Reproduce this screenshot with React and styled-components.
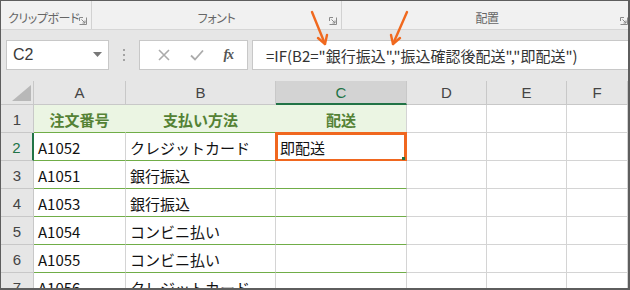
import styled, { createGlobalStyle } from "styled-components"

const Global = createGlobalStyle`
    html, body { margin: 0; padding: 0; background: #ffffff; }
    body { font-family: "Noto Sans CJK JP", "Liberation Sans", sans-serif; }
`

const COLS = [33, 92, 150, 131, 80, 80, 61]
const LETTERS = ["A", "B", "C", "D", "E", "F"]

const rows = [
    { n: 1, a: "注文番号", b: "支払い方法", c: "配送", head: true },
    { n: 2, a: "A1052", b: "クレジットカード", c: "即配送", active: true },
    { n: 3, a: "A1051", b: "銀行振込" },
    { n: 4, a: "A1053", b: "銀行振込" },
    { n: 5, a: "A1054", b: "コンビニ払い" },
    { n: 6, a: "A1055", b: "コンビニ払い" },
    { n: 7, a: "A1056", b: "クレジットカード" },
]

function Launcher() {
    return (
        <LauncherIcon width="8" height="8" viewBox="0 0 8 8">
            <path d="M0.5 4 V0.5 H4" fill="none" stroke="#8a8a8a" strokeWidth="1" />
            <path d="M0.5 7.5 H7.5 V0.5" fill="none" stroke="#8a8a8a" strokeWidth="1" />
            <path d="M2.5 2.5 L6 6 M6 3.5 V6 H3.5" fill="none" stroke="#8a8a8a" strokeWidth="1" />
        </LauncherIcon>
    )
}

export default function App() {
    return (
        <>
            <Global />
            <Frame>
                <Ribbon>
                    <Group w={91}>
                        <GroupLabel>クリップボード</GroupLabel>
                        <Launcher />
                    </Group>
                    <Group w={250}>
                        <GroupLabel>フォント</GroupLabel>
                        <Launcher />
                    </Group>
                    <Group w={290} last>
                        <GroupLabel>配置</GroupLabel>
                        <Launcher />
                    </Group>
                </Ribbon>

                <FormulaArea>
                    <NameBox>
                        <span>C2</span>
                        <svg width="9" height="5" viewBox="0 0 9 5">
                            <path d="M0 0 H9 L4.5 5 Z" fill="#777" />
                        </svg>
                    </NameBox>
                    <Grip>
                        <i /><i /><i />
                    </Grip>
                    <ButtonsBox>
                        <svg width="12" height="12" viewBox="0 0 12 12">
                            <path d="M1 1 L11 11 M11 1 L1 11" stroke="#ababab" strokeWidth="1.6" />
                        </svg>
                        <svg width="14" height="12" viewBox="0 0 14 12">
                            <path d="M1 6.5 L5 10.5 L13 1.5" fill="none" stroke="#ababab" strokeWidth="1.8" />
                        </svg>
                        <Fx>fx</Fx>
                    </ButtonsBox>
                    <FormulaInput>=IF(B2="銀行振込","振込確認後配送","即配送")</FormulaInput>
                </FormulaArea>

                <Sheet>
                    <Corner>
                        <svg width="19" height="16" viewBox="0 0 19 16">
                            <path d="M19 0 V16 H0 Z" fill="#b8b8b8" />
                        </svg>
                    </Corner>
                    {LETTERS.map((l) => (
                        <ColHead key={l} active={l === "C"}>{l}</ColHead>
                    ))}
                    {rows.map((r) => (
                        <Row key={r.n} r={r} />
                    ))}
                </Sheet>

                <Arrows width="630" height="60" viewBox="0 0 630 60">
                    <g fill="none" stroke="#f0691f" strokeWidth="2.4" strokeLinecap="round" strokeLinejoin="round">
                        <path d="M312 12 L325 44" />
                        <path d="M318 38 L325 44 L327 35" />
                        <path d="M407 12 L393 44" />
                        <path d="M391 35 L393 44 L400 38" />
                    </g>
                </Arrows>
            </Frame>
        </>
    )
}

function Row({ r }) {
    return (
        <>
            <RowHead active={r.active}>{r.n}</RowHead>
            <Cell head={r.head} table pad>{r.a}</Cell>
            <Cell head={r.head} table pad>{r.b}</Cell>
            <Cell head={r.head} table pad={!r.head} last>
                {r.c}
                {r.active && (
                    <Selection>
                        <Handle />
                    </Selection>
                )}
            </Cell>
            <Cell />
            <Cell />
            <Cell />
        </>
    )
}

const Frame = styled.div`
    position: relative;
    width: 630px;
    height: 290px;
    box-sizing: border-box;
    border: 1px solid #5e5e5e;
    border-right-width: 2px;
    border-bottom-width: 2px;
    overflow: hidden;
    background: #ffffff;
`

const Ribbon = styled.div`
    display: flex;
    height: 28px;
    background: #f1f1f1;
    border-bottom: 1px solid #d6d6d6;
`

const Group = styled.div`
    position: relative;
    width: ${(p) => p.w}px;
    flex: none;
    box-sizing: border-box;
    border-right: ${(p) => (p.last ? "none" : "1px solid #d2d2d2")};
    display: flex;
    align-items: flex-end;
    justify-content: center;
    padding-bottom: 3px;
    &:first-child {
        justify-content: flex-start;
        padding-left: 7px;
    }
`

const GroupLabel = styled.span`
    font-size: 12px;
    line-height: 16px;
    color: #666666;
    font-feature-settings: "palt";
    letter-spacing: -0.4px;
`

const LauncherIcon = styled.svg`
    position: absolute;
    right: 4px;
    bottom: 4px;
`

const FormulaArea = styled.div`
    display: flex;
    align-items: flex-start;
    height: 51px;
    box-sizing: border-box;
    padding: 10px 0 0 5px;
    background: #e6e6e6;
`

const Box = styled.div`
    height: 30px;
    box-sizing: border-box;
    background: #ffffff;
    border: 1px solid #c8c8c8;
    display: flex;
    align-items: center;
`

const NameBox = styled(Box)`
    width: 103px;
    justify-content: space-between;
    padding: 0 6px 0 6px;

    span {
        font-family: "Liberation Sans", sans-serif;
        font-size: 16px;
        color: #3a3a3a;
    }
    svg {
        margin-top: -2px;
    }
`

const Grip = styled.div`
    width: 30px;
    height: 30px;
    display: flex;
    flex-direction: column;
    align-items: center;
    justify-content: center;
    gap: 3px;

    i {
        display: block;
        width: 2px;
        height: 2px;
        background: #a3a3a3;
    }
`

const ButtonsBox = styled(Box)`
    width: 109px;
    justify-content: space-around;
    padding: 0 4px 0 8px;
    margin-right: 4px;
`

const Fx = styled.span`
    font-family: "Liberation Serif", serif;
    font-style: italic;
    font-weight: bold;
    font-size: 14px;
    color: #555555;
    letter-spacing: -1px;
`

const FormulaInput = styled(Box)`
    flex: 1;
    border-right: none;
    padding-left: 13px;
    font-size: 15px;
    color: #333333;
    white-space: nowrap;
`

const Sheet = styled.div`
    display: grid;
    grid-template-columns: ${COLS.map((c) => c + "px").join(" ")};
    grid-template-rows: 24px;
    grid-auto-rows: 28px;
    background: #ffffff;
`

const Corner = styled.div`
    background: #e6e6e6;
    border-right: 1px solid #c8c8c8;
    border-bottom: 1px solid #c8c8c8;
    box-sizing: border-box;
    display: flex;
    align-items: flex-end;
    justify-content: flex-end;
    padding: 0 2px 3px 0;
`

const ColHead = styled.div`
    box-sizing: border-box;
    background: ${(p) => (p.active ? "#d3d3d3" : "#e6e6e6")};
    border-right: 1px solid #c8c8c8;
    border-bottom: ${(p) => (p.active ? "2px solid #217346" : "1px solid #c8c8c8")};
    display: flex;
    align-items: center;
    justify-content: center;
    font-family: "Liberation Sans", sans-serif;
    font-size: 15px;
    color: ${(p) => (p.active ? "#217346" : "#444444")};
`

const RowHead = styled.div`
    box-sizing: border-box;
    background: #e6e6e6;
    border-right: ${(p) => (p.active ? "2px solid #217346" : "1px solid #c8c8c8")};
    border-bottom: 1px solid #c8c8c8;
    display: flex;
    align-items: center;
    justify-content: center;
    padding-top: 2px;
    font-family: "Liberation Sans", sans-serif;
    font-size: 15px;
    color: ${(p) => (p.active ? "#217346" : "#444444")};
`

const Cell = styled.div`
    position: relative;
    box-sizing: border-box;
    background: ${(p) => (p.head ? "#ebf5e3" : "#ffffff")};
    border-right: 1px solid ${(p) => (p.head && !p.last ? "#ebf5e3" : "#d4d4d4")};
    border-bottom: 1px solid ${(p) => (p.table ? "#70ad47" : "#d4d4d4")};
    display: flex;
    align-items: center;
    justify-content: ${(p) => (p.head ? "center" : "flex-start")};
    padding: ${(p) => (p.head ? "2px 0 0 0" : "2px 0 0 4px")};
    font-size: 15px;
    line-height: 20px;
    font-weight: ${(p) => (p.head ? 700 : 400)};
    color: ${(p) => (p.head ? "#548235" : "#111111")};
    white-space: nowrap;
`

const Selection = styled.div`
    position: absolute;
    top: -1px;
    left: -1px;
    right: -1px;
    bottom: -2px;
    border: 3px solid #f0671f;
`

const Handle = styled.div`
    position: absolute;
    right: -1px;
    bottom: -1px;
    width: 3px;
    height: 3px;
    background: #217346;
`

const Arrows = styled.svg`
    position: absolute;
    top: -1px;
    left: -1px;
    pointer-events: none;
`
